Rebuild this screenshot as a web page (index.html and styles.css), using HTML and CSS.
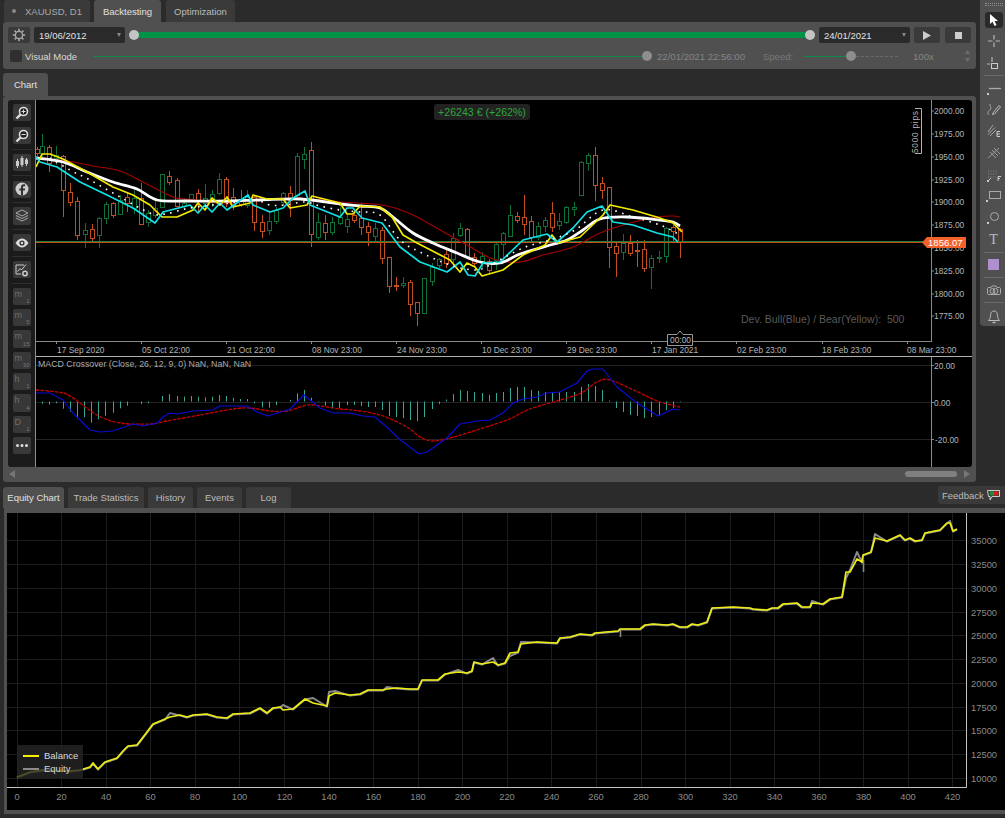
FILE: index.html
```html
<!DOCTYPE html>
<html lang="en">
<head>
<meta charset="utf-8">
<title>cTrader Backtesting</title>
<link rel="stylesheet" href="styles.css">
</head>
<body>
<div class="top">
  <div class="main">
    <div class="tabs">
      <div class="tab tab-sym"><span class="dot"></span>XAUUSD, D1</div>
      <div class="tab active tab-bt">Backtesting</div>
      <div class="tab tab-opt">Optimization</div>
    </div>
    <div class="ctrl">
      <div class="ctrl-row">
        <div class="btn gear"><svg width="14" height="14" viewBox="0 0 14 14"><circle cx="7" cy="7" r="3.6" fill="none" stroke="#aaa" stroke-width="1.3"/><path d="M7 .8V3M7 11V13.2M.8 7H3M11 7H13.2M2.6 2.6L4.2 4.2M9.8 9.8L11.4 11.4M2.6 11.4L4.2 9.8M9.8 4.2L11.4 2.6" stroke="#aaa" stroke-width="1.6"/></svg></div>
        <div class="date">19/06/2012<span class="caret"></span></div>
        <div class="range"><span class="knob"></span><span class="bar"></span><span class="knob"></span></div>
        <div class="date">24/01/2021<span class="caret"></span></div>
        <div class="btn act"><svg width="8" height="9" viewBox="0 0 8 9"><path d="M0 0L8 4.5L0 9Z" fill="#ccc"/></svg></div>
        <div class="btn act act2"><svg width="7" height="7" viewBox="0 0 7 7"><rect width="7" height="7" fill="#ccc"/></svg></div>
      </div>
      <div class="ctrl-row second">
        <span class="check"></span>
        <span class="vm">Visual Mode</span>
        <div class="track"><span class="thin"></span><span class="knob dim"></span></div>
        <span class="stamp">22/01/2021 22:56:00</span>
        <span class="speed">Speed:</span>
        <div class="speedbar"><span class="thin"></span><span class="knob dim"></span><span class="dash"></span></div>
        <span class="mult">100x</span>
        <svg class="spin" width="5" height="12" viewBox="0 0 5 12"><path d="M0 4L2.5 0L5 4ZM0 8L2.5 12L5 8Z" fill="#6e6e6e"/></svg>
      </div>
    </div>
    <div class="tab active tab-chart">Chart</div>
    <div class="chartpanel">
      <div class="chartbody">
        <div class="side">
          <div class="sb first"><svg width="14" height="14" viewBox="0 0 14 14"><circle cx="8.5" cy="5.5" r="4" fill="#222" stroke="#ddd" stroke-width="1.6"/><path d="M5.5 8.5L1.5 12.5" stroke="#ddd" stroke-width="2.4"/><path d="M6.5 5.5H10.5M8.5 3.5V7.5" stroke="#ddd"/></svg></div>
          <div class="sb"><svg width="14" height="14" viewBox="0 0 14 14"><circle cx="8.5" cy="5.5" r="4" fill="#222" stroke="#ddd" stroke-width="1.6"/><path d="M5.5 8.5L1.5 12.5" stroke="#ddd" stroke-width="2.4"/><path d="M6.5 5.5H10.5" stroke="#ddd"/></svg></div>
          <span class="sep"></span>
          <div class="sb"><svg width="14" height="14" viewBox="0 0 14 14"><path d="M2.5 4V13M7 1V12M11.5 3V11" stroke="#ccc"/><rect x="1" y="6" width="3" height="5" fill="#ccc"/><rect x="5.5" y="3" width="3" height="7" fill="#ccc"/><rect x="10" y="4.500" width="3" height="4.500" fill="#ccc"/></svg></div>
          <span class="sep"></span>
          <div class="sb"><svg width="14" height="14" viewBox="0 0 14 14"><circle cx="7" cy="7" r="6.500" fill="#ccc"/><path d="M8 13.500V8.500H9.800L10.100 6.500H8V5.300C8 4.600 8.300 4.200 9 4.200H10.200V2.500C9.800 2.400 9.300 2.300 8.700 2.300C7 2.300 6 3.300 6 5V6.500H4.300V8.500H6V13.500Z" fill="#333"/></svg></div>
          <span class="sep"></span>
          <div class="sb"><svg width="14" height="14" viewBox="0 0 14 14"><path d="M7 1L13 4L7 7L1 4Z" fill="none" stroke="#aaa"/><path d="M1 6.500L7 9.500L13 6.500M1 9L7 12L13 9" fill="none" stroke="#aaa"/></svg></div>
          <span class="sep"></span>
          <div class="sb"><svg width="14" height="10" viewBox="0 0 14 10"><path d="M.5 5C3 1.500 5 .5 7 .5S11 1.500 13.500 5C11 8.500 9 9.500 7 9.500S3 8.500 .5 5Z" fill="#ddd"/><circle cx="7" cy="5" r="2.600" fill="#333"/><circle cx="7" cy="5" r="1.200" fill="#ddd"/></svg></div>
          <span class="sep"></span>
          <div class="sb"><svg width="14" height="14" viewBox="0 0 14 14"><path d="M9 2H1V11H6" fill="none" stroke="#ccc"/><path d="M2.500 8.500L5 5.500L6.500 7L11 1.500" fill="none" stroke="#ccc"/><circle cx="10" cy="10.500" r="2.200" fill="none" stroke="#ccc" stroke-width="1.500"/></svg></div>
          <span class="sep"></span>
          <div class="sb tf">m<sub>1</sub></div>
          <div class="sb tf">m<sub>5</sub></div>
          <div class="sb tf">m<sub>15</sub></div>
          <div class="sb tf">m<sub>30</sub></div>
          <div class="sb tf">h<sub>1</sub></div>
          <div class="sb tf">h<sub>4</sub></div>
          <div class="sb tf">D<sub>1</sub></div>
          <div class="sb"><svg width="12" height="3" viewBox="0 0 12 3"><circle cx="1.500" cy="1.500" r="1.500" fill="#ddd"/><circle cx="6" cy="1.500" r="1.500" fill="#ddd"/><circle cx="10.500" cy="1.500" r="1.500" fill="#ddd"/></svg></div>
        </div>
        <svg class="chart" id="chart" width="936" height="367" viewBox="36 100 936 367">
          <path class="grid" d="M36 365.500H931M36 402.500H931M36 439.500H931"/>
          <g id="candles"></g>
          <path class="pl-g" d="M36 241.500H925"/>
          <path class="pl-o" d="M36 242.500H925"/>
          <g id="lines"></g>
          <g id="macd"></g>
          <path class="axis" d="M931.500 100V342M36 341.500H931.500M931.500 357V467"/>
          <path class="sepline" d="M36 356.500H972"/>
          <path class="axis" d="M56.500 341V344M141.500 341V344M226.500 341V344M311.500 341V344M396.500 341V344M481.500 341V344M566.500 341V344M651.500 341V344M736.500 341V344M822.500 341V344M907.500 341V344"/>
          <path class="axis" d="M931 111H934M931 134H934M931 157H934M931 180H934M931 202H934M931 225H934M931 248H934M931 271H934M931 294H934M931 316H934M931 365.500H934M931 402.500H934M931 439.500H934"/>
          <g class="ax">
            <text x="934" y="114">2000.00</text><text x="934" y="137">1975.00</text><text x="934" y="160">1950.00</text><text x="934" y="183">1925.00</text><text x="934" y="205">1900.00</text><text x="934" y="228">1875.00</text><text x="934" y="251">1850.00</text><text x="934" y="274">1825.00</text><text x="934" y="297">1800.00</text><text x="934" y="319">1775.00</text>
            <text x="57" y="353">17 Sep 2020</text><text x="142" y="353">05 Oct 22:00</text><text x="227" y="353">21 Oct 22:00</text><text x="312" y="353">08 Nov 23:00</text><text x="397" y="353">24 Nov 23:00</text><text x="482" y="353">10 Dec 23:00</text><text x="567" y="353">29 Dec 23:00</text><text x="652" y="353">17 Jan 2021</text><text x="737" y="353">02 Feb 23:00</text><text x="822" y="353">18 Feb 23:00</text><text x="907" y="353">08 Mar 23:00</text>
            <text x="934" y="369">20.00</text><text x="934" y="406">0.00</text><text x="935" y="443">-20.00</text>
            <text x="38" y="367" class="macdlabel">MACD Crossover (Close, 26, 12, 9, 0) NaN, NaN, NaN</text>
          </g>
          <path class="pips" d="M915 108.500H921.500V153.500H915"/>
          <text class="ax pipstxt" transform="translate(918 153) rotate(-90)">5000 pips</text>
          <text class="dev" x="741" y="323">Dev. Bull(Blue) / Bear(Yellow):  500</text>
          <polygon class="pricetag" points="922,242.500 927,237 966,237 966,248 927,248"/>
          <text class="pricetxt" x="928" y="246">1856.07</text>
          <path class="timetag" d="M667.500 334.500H677L680 331L683 334.500H692.500V345.500H667.500Z"/>
          <text class="timetxt" x="670" y="343">00:00</text>
        </svg>
        <div class="profit">+26243 € (+262%)</div>
      </div>
      <div class="scroll">
        <svg width="6" height="8" viewBox="0 0 6 8"><path d="M6 0L0 4L6 8Z" fill="#767676"/></svg>
        <span class="thumb"></span>
        <svg width="6" height="8" viewBox="0 0 6 8"><path d="M0 0L6 4L0 8Z" fill="#767676"/></svg>
      </div>
    </div>
  </div>
  <div class="tools">
    <span class="grip"></span>
    <div class="tb on"><svg width="12" height="14" viewBox="0 0 12 14"><path d="M2 1V11L4.500 8.800L6.500 13L8.500 12L6.500 8H10Z" fill="#fff"/></svg></div>
    <div class="tb"><svg width="14" height="14" viewBox="0 0 14 14"><path d="M7 1V5.500M7 8.500V13M1 7H5.500M8.500 7H13" stroke="#b5b5b5" stroke-width="1.200"/></svg></div>
    <div class="tb"><svg width="14" height="14" viewBox="0 0 14 14"><path d="M5 1V6M0 8H3" stroke="#b5b5b5" stroke-width="1.200"/><rect x="4.500" y="7.500" width="6" height="5" fill="none" stroke="#ccc"/></svg></div>
    <span class="tsep"></span>
    <div class="tb"><svg width="16" height="16" viewBox="0 0 16 16"><path d="M3 9.500H15" stroke="#aaa" stroke-width="1.300"/><rect x="1" y="14" width="2" height="2" fill="#ccc"/></svg></div>
    <div class="tb"><svg width="14" height="14" viewBox="0 0 14 14"><path d="M2 13C0 11 1 9 3 8S3 4 3 2" fill="none" stroke="#aaa"/><path d="M6 11L12 3.500L13.500 5L7.500 12L5.500 12.500Z" fill="none" stroke="#bbb"/></svg></div>
    <div class="tb"><svg width="14" height="14" viewBox="0 0 14 14"><path d="M1 8L6 1M1 10.500L8 3.500M3 12L9 6" stroke="#aaa"/><path d="M10 7.500H13M10 10H13M10 12.500H13M10 7.500V12.500" stroke="#ccc"/></svg></div>
    <div class="tb"><svg width="14" height="14" viewBox="0 0 14 14"><path d="M1 13L12 3M5 5L11 11M3 7L9 13M7 3L13 9" stroke="#999" transform="translate(0 -1)"/></svg></div>
    <div class="tb"><svg width="14" height="14" viewBox="0 0 14 14"><path d="M1 3H11M1 6H11M1 9H9" stroke="#888" stroke-dasharray="1 1.500"/><path d="M11 8.500H14M11 8.500V13M11 10.500H13" stroke="#ccc"/><path d="M4 10L1 13" stroke="#ccc"/><rect x="0" y="12" width="2" height="2" fill="#ccc"/></svg></div>
    <div class="tb"><svg width="15" height="14" viewBox="0 0 15 14"><rect x="3.500" y="2.500" width="11" height="7" fill="none" stroke="#aaa"/><rect x="0" y="11" width="2" height="2" fill="#ccc"/></svg></div>
    <div class="tb"><svg width="15" height="14" viewBox="0 0 15 14"><circle cx="8.500" cy="5.500" r="4" fill="none" stroke="#aaa"/><rect x="1" y="11" width="2" height="2" fill="#ccc"/></svg></div>
    <div class="tb ttxt">T</div>
    <span class="tsep"></span>
    <div class="tb"><span class="swatch"></span></div>
    <span class="tsep"></span>
    <div class="tb"><svg width="14" height="12" viewBox="0 0 14 12"><path d="M1.500 3.500H4L5 2H9L10 3.500H12.500C13 3.500 13.500 4 13.500 4.500V9C13.500 10 13 10.500 12 10.500H2C1 10.500 .5 10 .5 9V4.500C.5 4 1 3.500 1.500 3.500Z" fill="none" stroke="#aaa"/><circle cx="5.500" cy="7" r="2.500" fill="none" stroke="#aaa"/><circle cx="8.500" cy="7" r="2.500" fill="none" stroke="#aaa"/></svg></div>
    <span class="tsep"></span>
    <div class="tb bell"><svg width="12" height="14" viewBox="0 0 12 14"><path d="M6 1C8.500 1 9.500 3 9.500 5.500C9.500 8 10.500 9.500 11.500 10.500H.5C1.500 9.500 2.500 8 2.500 5.500C2.500 3 3.500 1 6 1Z" fill="none" stroke="#bbb"/><path d="M4.500 12.500H7.500" stroke="#bbb" stroke-width="1.400"/></svg></div>
  </div>
</div>
<div class="bottomhead">
  <div class="tab active b1">Equity Chart</div>
  <div class="tab b2">Trade Statistics</div>
  <div class="tab b3">History</div>
  <div class="tab b3">Events</div>
  <div class="tab b3">Log</div>
  <div class="feedback">Feedback
    <svg width="13" height="11" viewBox="0 0 13 11"><path d="M.5 .5H12.500V6.500H5L3 10V6.500H1.500Z" fill="none" stroke="#ccc"/><path d="M3 1.500H7V5.500H3Z" fill="#1f8f3a"/><path d="M7 1.500H11.500V5.500H7Z" fill="#d11f1f"/></svg>
  </div>
</div>
<div class="equity">
  <svg class="eqchart" id="eq" width="998" height="297" viewBox="7 513 998 297">
    <path class="eqgrid" d="M7 540.500H966M7 564.500H966M7 588.500H966M7 612.500H966M7 635.500H966M7 659.500H966M7 683.500H966M7 707.500H966M7 730.500H966M7 754.500H966M7 778.500H966"/>
    <path class="eqgrid" d="M17.500 513V787M61.500 513V787M106.500 513V787M150.500 513V787M195.500 513V787M239.500 513V787M284.500 513V787M329.500 513V787M373.500 513V787M418.500 513V787M462.500 513V787M507.500 513V787M551.500 513V787M596.500 513V787M641.500 513V787M685.500 513V787M730.500 513V787M774.500 513V787M819.500 513V787M863.500 513V787M908.500 513V787M952.500 513V787"/>
    <g id="eqlines"></g>
    <path class="eqaxis" d="M966.500 513V787.500M7 787.500H966.500"/>
    <g class="eqax">
      <text x="971" y="544">35000</text><text x="971" y="568">32500</text><text x="971" y="592">30000</text><text x="971" y="616">27500</text><text x="971" y="639">25000</text><text x="971" y="663">22500</text><text x="971" y="687">20000</text><text x="971" y="711">17500</text><text x="971" y="734">15000</text><text x="971" y="758">12500</text><text x="971" y="782">10000</text>
    </g>
    <g class="eqax mid">
      <text x="17" y="800">0</text><text x="61.500" y="800">20</text><text x="106" y="800">40</text><text x="150.500" y="800">60</text><text x="195" y="800">80</text><text x="239.500" y="800">100</text><text x="284.500" y="800">120</text><text x="329" y="800">140</text><text x="373.500" y="800">160</text><text x="418" y="800">180</text><text x="462.500" y="800">200</text><text x="507" y="800">220</text><text x="551.500" y="800">240</text><text x="596" y="800">260</text><text x="641" y="800">280</text><text x="685.500" y="800">300</text><text x="730" y="800">320</text><text x="774.500" y="800">340</text><text x="819" y="800">360</text><text x="863.500" y="800">380</text><text x="908" y="800">400</text><text x="952.500" y="800">420</text>
    </g>
  </svg>
  <div class="legend">
    <div class="lg"><span class="sw yellow"></span>Balance</div>
    <div class="lg"><span class="sw gray"></span>Equity</div>
  </div>
</div>
<script src="chart.js"></script>
</body>
</html>
```
FILE: styles.css
```css
* { box-sizing: border-box; }
html, body { margin: 0; padding: 0; }
body {
  width: 1005px;
  height: 818px;
  overflow: hidden;
  background: #2b2b2b;
  font-family: "Liberation Sans", Arial, sans-serif;
  font-size: 9.5px;
  color: #c8c8c8;
}
.top { display: flex; height: 483px; }
.main { width: 976px; padding-left: 3px; flex: none; }

.tabs { display: flex; height: 22px; padding-left: 1px; gap: 4px; }
.tab {
  display: flex;
  align-items: center;
  justify-content: center;
  height: 100%;
  background: #3a3a3a;
  border-radius: 3px 3px 0 0;
  color: #bcbcbc;
}
.tab.active { background: #505050; color: #e0e0e0; }
.tab-sym { width: 86px; color: #a8a8a8; }
.tab-bt { width: 67px; }
.tab-opt { width: 69px; margin-left: 1px; }
.dot { width: 4px; height: 4px; border-radius: 50%; background: #888; margin-right: 9px; }

.ctrl {
  height: 47px;
  background: #505050;
  border-radius: 3px;
  padding: 5px 5px 0 5px;
  display: flex;
  flex-direction: column;
  gap: 7px;
}
.ctrl-row { display: flex; align-items: center; height: 16px; gap: 4px; }
.ctrl-row > * { flex: none; }
.ctrl-row.second { padding-left: 2px; gap: 0; height: 12px; }
.btn {
  height: 16px;
  background: #3a3a3a;
  border-radius: 2px;
  display: flex;
  align-items: center;
  justify-content: center;
}
.gear { width: 22px; }
.act { width: 26px; }
.act2 { margin-left: 1px; }
.date {
  width: 91px;
  height: 16px;
  background: #2a2a2a;
  border-radius: 2px;
  padding-left: 5px;
  display: flex;
  align-items: center;
  justify-content: space-between;
  color: #e0e0e0;
  font-size: 9.5px;
}
.caret {
  width: 0;
  height: 0;
  margin-right: 4px;
  border-left: 2.5px solid transparent;
  border-right: 2.5px solid transparent;
  border-top: 4px solid #888;
}
.range { display: flex; align-items: center; width: 686px; }
.range .bar { flex: 1; height: 6px; background: #009348; margin: 0 -1px; }
.knob { flex: none; width: 10px; height: 10px; border-radius: 50%; background: #c4c4c4; position: relative; z-index: 1; }
.knob.dim { background: #8e8e8e; }
.check { width: 12px; height: 12px; background: #2f2f2f; border-radius: 2px; }
.vm { margin-left: 3px; width: 69px; color: #d8d8d8; }
.track { display: flex; align-items: center; width: 558px; }
.thin { flex: 1; height: 1px; background: #0f8a49; }
.stamp { margin-left: 5px; width: 106px; color: #858585; font-size: 9.6px; }
.speed { width: 40px; color: #787878; }
.speedbar { display: flex; align-items: center; width: 95px; }
.speedbar .thin { flex: 1; }
.dash { flex: 1; border-top: 1px dashed #6b6b6b; }
.mult { margin-left: 15px; width: 52px; color: #858585; font-size: 9.6px; }

.tab-chart { width: 45px; height: 23px; margin-top: 4px; }
.chartpanel { height: 386px; background: #505050; border-radius: 3px; padding: 4px 4px 0 5px; }
.chartbody { position: relative; display: flex; height: 367px; }
.side {
  width: 28px;
  flex: none;
  background: #1b1b1b;
  border-right: 1px solid #8c8c8c;
  border-radius: 3px 0 0 3px;
  display: flex;
  flex-direction: column;
  align-items: center;
  padding-top: 4px;
  gap: 4px;
}
.sb {
  width: 18px;
  height: 17.3px;
  flex: none;
  background: #383838;
  border-radius: 2px;
  display: flex;
  align-items: center;
  justify-content: center;
}
.sb.first { margin-bottom: 1.7px; }
.tf {
  align-items: flex-start;
  justify-content: flex-start;
  padding: 2px 0 0 2px;
  color: #6f6f6f;
  font-size: 9px;
  line-height: 9px;
  position: relative;
}
.tf sub { position: absolute; right: 1px; bottom: 0; font-size: 6px; line-height: 7px; color: #777; }
.sep { width: 20px; height: 1px; background: #2e2e2e; flex: none; margin: 0.25px 0; }
.chart { display: block; background: #000; flex: none; border-radius: 0 3px 3px 0; }
.profit {
  position: absolute;
  left: 426px;
  top: 4px;
  width: 96px;
  height: 16px;
  background: #222;
  border-radius: 3px;
  color: #2da73c;
  font-size: 10.6px;
  line-height: 16px;
  text-align: center;
}
.scroll { height: 14px; display: flex; align-items: center; padding-left: 1px; }
.thumb { width: 52px; height: 6px; border-radius: 3px; background: #808080; margin: 0 7px 0 auto; }
.scroll svg:last-child { margin-right: 2px; }

.grid { stroke: #222; stroke-width: 1; fill: none; }
.eqgrid { stroke: #1d1d1d; stroke-width: 1; fill: none; }
.pl-g { stroke: #1f7f3a; stroke-width: 1; }
.pl-o { stroke: #c9501e; stroke-width: 1; }
.axis { stroke: #8a8a8a; stroke-width: 1; fill: none; }
.sepline { stroke: #b0b0b0; stroke-width: 1; }
.ax text, text.ax { font-family: "Liberation Sans", Arial, sans-serif; font-size: 8.4px; fill: #b4b4b4; }
.ax .macdlabel { font-size: 8.8px; fill: #a8a8a8; }
text.pipstxt { letter-spacing: 0.7px; }
.pips { stroke: #b0b0b0; fill: none; }
.dev { font-family: "Liberation Sans", Arial, sans-serif; font-size: 10.5px; fill: #5a5a5a; white-space: pre; }
.pricetag { fill: #f2622a; }
.pricetxt { font-family: "Liberation Sans", Arial, sans-serif; font-size: 9.6px; fill: #fff; }
.timetag { fill: #000; stroke: #9a9a9a; }
.timetxt { font-family: "Liberation Sans", Arial, sans-serif; font-size: 8.4px; fill: #bbb; }

.tools {
  width: 25px;
  height: 326px;
  margin-left: 4px;
  flex: none;
  background: #505050;
  border-radius: 0 0 0 4px;
  display: flex;
  flex-direction: column;
  align-items: center;
  padding: 3px 0 0 2px;
}
.grip { width: 18px; height: 3px; flex: none; margin-bottom: 6px; border-top: 1px dotted #8a8a8a; border-bottom: 1px dotted #8a8a8a; }
.tb { width: 18px; height: 21.8px; flex: none; display: flex; align-items: center; justify-content: center; }
.tb.on { height: 16px; background: #2a2a2a; border-radius: 3px; margin-bottom: 2px; }
.tb.bell { margin-top: 3px; }
.tsep { width: 20px; height: 1px; background: #6a6a6a; flex: none; margin: 1px 0; }
.ttxt { font-family: "Liberation Serif", serif; font-size: 14px; color: #bbb; }
.swatch { width: 11px; height: 11px; background: #ae90cf; }

.bottomhead { display: flex; height: 21px; margin-top: 4px; padding-left: 3px; gap: 4px; }
.b1 { width: 61px; }
.b2 { width: 76px; }
.b3 { width: 45px; }
.feedback {
  margin-left: auto;
  width: 67px;
  height: 18px;
  margin-top: -1px;
  background: #3a3a3a;
  border-radius: 3px 0 0 3px;
  display: flex;
  align-items: center;
  gap: 3px;
  padding-left: 4px;
  color: #bcbcbc;
}
.equity {
  position: relative;
  margin-left: 4px;
  width: 1001px;
  height: 306px;
  border-top: 5px solid #505050;
  border-bottom: 4px solid #505050;
  border-left: 3px solid #505050;
  background: #000;
}
.eqchart { display: block; }
.eqaxis { stroke: #c4c4c4; fill: none; stroke-width: 1; }
.eqax text { font-family: "Liberation Sans", Arial, sans-serif; font-size: 9.4px; fill: #8a8a8a; }
.eqax.mid text { text-anchor: middle; }
.legend {
  position: absolute;
  left: 10px;
  top: 232px;
  width: 66px;
  height: 33px;
  background: rgba(38, 38, 38, 0.8);
  padding: 4px 0 0 6px;
  color: #d8d8d8;
  font-size: 9.5px;
}
.lg { display: flex; align-items: center; gap: 5px; height: 13px; }
.sw { width: 16px; height: 2px; }
.sw.yellow { background: #f4f000; }
.sw.gray { background: #8a8a8a; }
```
FILE: chart.js
```js
(function () {
  var NS = 'http://www.w3.org/2000/svg';
  function el(parent, name, attrs) {
    var e = document.createElementNS(NS, name);
    for (var k in attrs) e.setAttribute(k, attrs[k]);
    parent.appendChild(e);
    return e;
  }
  function poly(parent, pts, color, w, extra) {
    var a = { points: pts.map(function (p) { return p.join(','); }).join(' '), fill: 'none', stroke: color, 'stroke-width': w, 'stroke-linejoin': 'round' };
    for (var k in extra || {}) a[k] = extra[k];
    return el(parent, 'polyline', a);
  }
  // Catmull-Rom through the points, for the moving averages
  function smooth(parent, p, color, w, extra) {
    var d = 'M' + p[0][0] + ' ' + p[0][1];
    for (var i = 0; i < p.length - 1; i++) {
      var a = p[Math.max(i - 1, 0)], b = p[i], c = p[i + 1], e = p[Math.min(i + 2, p.length - 1)];
      d += 'C' + (b[0] + (c[0] - a[0]) / 6).toFixed(1) + ' ' + (b[1] + (c[1] - a[1]) / 6).toFixed(1) + ' ' +
        (c[0] - (e[0] - b[0]) / 6).toFixed(1) + ' ' + (c[1] - (e[1] - b[1]) / 6).toFixed(1) + ' ' + c[0] + ' ' + c[1];
    }
    var at = { d: d, fill: 'none', stroke: color, 'stroke-width': w, 'stroke-linejoin': 'round' };
    for (var k in extra || {}) at[k] = extra[k];
    return el(parent, 'path', at);
  }

  // colour, x, wick top, body top, body bottom, wick bottom
  var O = '#c24e1e', G = '#0c7038';
  var candles = [
    [O,36.5,147,149,153,156],[G,42,134,146,153,158],[O,49,145,147,163,172],[G,56,146,155,158,165],
    [O,63.3,155,156,190,217],[O,70.3,183,192,202,206],[O,77.3,197,201,235,240],[G,84.5,223,230,234,248],
    [O,91.5,224,229,238,241],[G,98.5,217,218,235,248],[G,105.7,202,204,218,224],[O,112.7,202,203,215,218],
    [G,120,195,200,214,215],[O,127,193,197,203,212],[G,134,190,198,208,214],[O,141.3,183,198,224,225],
    [G,148.3,210,213,222,227],[G,155.3,200,208,215,218],[G,162.3,174,174,207,208],[O,169.3,171,176,182,185],
    [O,176.5,178,180,206,207],[G,183.6,199,203,206,208],[G,190.7,194,194,200,202],[O,198,189,193,200,213],
    [G,205,184,198,203,207],[G,212,190,194,200,207],[G,219.3,173,179,193,195],[O,226.3,177,179,202,207],
    [O,233.3,188,197,205,210],[O,240.5,190,199,204,207],[G,247.3,190,197,205,208],[O,254.3,195,197,222,231],
    [O,261.7,215,222,231,238],[G,268.7,212,221,230,235],[G,275.7,207,210,221,224],[G,283.3,192,193,202,205],
    [O,290.3,186,193,200,217],[G,297.3,153,156,195,197],[G,304.3,147,154,159,169],[O,311.3,142,150,234,247],
    [G,318.3,213,222,237,240],[O,325.3,215,223,232,240],[G,332.3,217,222,232,235],[G,339.5,207,217,223,225],
    [G,346.7,215,219,226,233],[O,354,212,215,220,223],[O,361,203,218,227,235],[O,368,222,226,232,246],
    [G,375,223,228,236,243],[O,382.3,227,230,258,264],[O,389.3,257,257,286,293],[O,396.3,277,285,286,291],
    [G,403.3,277,283,285,288],[O,410.3,280,282,304,316],[O,417.3,302,302,313,326],[G,424.3,278,278,313,314],
    [G,431.7,263,267,281,286],[G,438.7,258,259,265,268],[O,446,250,254,263,268],[G,453.3,233,238,259,263],
    [G,460.3,223,228,235,237],[O,467.3,228,229,257,258],[O,474.3,253,257,263,267],[G,481.7,252,256,262,268],
    [O,488.7,259,261,270,273],[G,495.7,243,244,260,270],[G,502.7,232,233,244,263],[G,510,205,215,236,237],
    [O,517,212,216,220,223],[O,524,195,217,224,235],[O,531.3,216,221,237,242],[G,538.3,222,226,237,240],
    [G,545.3,217,220,226,232],[O,552.3,202,213,227,232],[G,559.3,213,221,225,230],[G,566.3,206,207,222,224],
    [G,573.7,202,207,209,216],[G,580.7,161,162,195,196],[G,587.7,153,155,163,171],[O,594.7,147,155,185,201],
    [O,602,177,183,190,199],[O,609,187,187,247,268],[O,616,243,246,253,277],[G,623.3,234,243,252,260],
    [O,630.3,235,243,253,256],[O,637.3,240,250,251,267],[O,644.3,240,249,268,272],[G,651.3,255,258,267,289],
    [G,658.7,251,257,258,263],[G,665.7,227,228,256,263],[O,672.7,225,227,231,243],[O,680,228,229,242,258]
  ];
  var cg = document.getElementById('candles');
  candles.forEach(function (c) {
    var x = Math.round(c[1]) + 0.5;
    el(cg, 'path', { d: 'M' + x + ' ' + c[2] + 'V' + c[5], stroke: c[0], 'stroke-width': 1 });
    el(cg, 'rect', { x: x - 2, y: c[3] + 0.5, width: 4, height: Math.max(c[4] - c[3], 1), fill: '#000', stroke: c[0], 'stroke-width': 1 });
  });

  var lg = document.getElementById('lines');
  smooth(lg, [[36,157],[67,161],[93,166],[120,171],[143,182],[173,197],[187,199],[227,204],[250,200],[300,198],[340,202],[373,204],[395,208],[417,217],[440,230],[467,245],[493,259],[520,262],[543,255],[573,247],[600,233],[630,223],[657,217],[673,216],[680,217]], '#a80000', 1.1);
  smooth(lg, [[36,158],[63,162],[87,172],[113,182],[137,189],[157,200],[187,201],[227,201],[260,200],[300,199],[340,204],[360,206],[380,208],[393,217],[413,233],[433,243],[457,253],[480,262],[500,263],[520,254],[547,246],[567,240],[583,230],[600,219],[627,217],[660,220],[673,222],[680,226]], '#ffffff', 2.8);
  poly(lg, [[36,167],[42,154],[50,154],[63,159],[87,172],[113,187],[133,195],[150,205],[162,217],[177,217],[193,210],[198,203],[205,210],[212,198],[220,205],[227,197],[233,207],[250,203],[253,195],[267,199],[283,199],[290,208],[307,205],[312,196],[340,203],[347,214],[353,214],[360,206],[380,207],[392,217],[403,235],[417,243],[450,260],[460,272],[467,263],[475,267],[482,276],[503,270],[523,255],[545,245],[552,235],[558,243],[580,237],[603,215],[610,205],[633,210],[660,218],[673,223],[682,232]], '#f2ea00', 1.7);
  poly(lg, [[36,157],[40,162],[57,167],[80,182],[107,195],[133,208],[155,223],[163,212],[190,205],[198,213],[205,205],[212,212],[220,203],[227,210],[248,195],[253,205],[270,212],[283,208],[293,198],[305,191],[310,205],[340,217],[347,208],[353,208],[362,218],[382,223],[400,247],[420,262],[447,272],[460,262],[468,275],[475,276],[483,263],[500,262],[523,240],[547,234],[557,242],[573,228],[587,212],[602,206],[613,222],[633,225],[657,233],[673,237],[678,242]], '#12e2e6', 1.7);
  smooth(lg, [[50,158],[70,170],[90,180],[120,197],[150,213],[165,214],[190,208],[230,203],[255,200],[270,205],[285,205],[305,202],[320,206],[340,210],[360,212],[380,215],[400,240],[420,252],[450,265],[475,270],[490,265],[523,248],[550,240],[575,230],[603,210],[633,217],[660,225],[680,235]], '#ffffff', 1.6, { 'stroke-dasharray': '1.6 5.5' });

  // MACD histogram: x, end of the bar (y); the zero line is at 401.5
  var zero = 401.5;
  var bars = [[42,403.7],[49,404.7],[56,403.3],[63,408.7],[70,411.7],[77,418.3],[84,417.3],[91,422.7],[98,419.3],[105,415.7],[113,412.7],[120,408.3],[127,405.7],[141,404],[148,403.3],[162,396],[169,394],[177,396],[184,396.7],[191,396],[198,396.7],[205,397.3],[212,396.7],[219,395],[226,396],[233,398],[240,399],[247,399],[254,403.3],[262,407.3],[269,407.7],[276,405],[290,400],[297,393.3],[304,390],[311,397.7],[318,401],[325,405.7],[332,408.3],[339,408.3],
    [347,405],[354,405],[361,406],[368,407],[375,407],[382,410],[389,416],[396,417],[403,418],[410,420],[417,421],[424,417],[432,409],[439,404],[446,399.5],[453,394],[460,390],[467,391],[474,392],[482,393],[489,395],[496,393],[503,392],[510,388],[517,387],[524,387],[531,390],[538,391],[545,392],[552,392],[559,392],[566,392],[574,392],[581,387],[588,384],[595,386],[602,390],[609,400.5],[616,408],[623,412],[630,415],[637,416],[644,418],[651,417],[659,416],[666,410],[673,408],[680,401]];
  var mg = document.getElementById('macd');
  el(mg, 'path', {
    d: bars.map(function (b) { return 'M' + (b[0] + 0.5) + ' ' + zero + 'V' + b[1]; }).join(''),
    stroke: '#35a898', 'stroke-width': 1, fill: 'none'
  });
  smooth(mg, [[36,390],[57,392],[70,396],[97,415],[120,423],[150,424],[167,421],[200,415],[233,409],[250,408],[270,411],[287,411],[303,406],[313,405],[340,409],[353,410],[380,415],[407,427],[420,437],[433,441],[450,438],[467,433],[507,420],[530,409],[567,398],[583,392],[597,382],[610,380],[640,393],[660,402],[680,407]], '#c80000', 1.3, { 'stroke-dasharray': '3.5 1.2' });
  poly(mg, [[36,393],[50,393],[63,400],[73,413],[90,430],[100,432],[113,431],[133,424],[143,426],[157,423],[163,417],[170,413],[177,414],[193,411],[213,410],[220,406],[247,406],[257,412],[268,416],[290,409],[304,395],[320,408],[333,413],[350,413],[363,416],[375,417],[390,430],[398,438],[419,454],[427,452],[447,438],[460,424],[477,421],[490,420],[503,413],[513,403],[523,399],[537,397],[547,393],[560,392],[577,383],[587,371],[593,369],[603,369],[617,387],[637,403],[658,416],[673,409],[680,410]], '#0b0bd8', 1.2);

  // Equity chart
  var eq = [[17,777],[30,772],[43,770],[70,771],[80,770],[90,767],[93,763],[98,769],[105,762],[117,758],[123,751],[128,746],[137,745],[147,732],[153,724],[165,719],[170,717],[180,715],[187,717],[193,715],[207,714],[217,717],[227,718],[233,714],[250,713],[260,708],[267,713],[273,708],[280,707],[283,710],[293,709],[305,699],[313,703],[327,706],[329,696],[335,693],[350,695],[360,694],[368,690],[377,690],[383,690],[387,689],[397,688],[410,689],[418,689],[422,680],[430,680],[438,680],[445,674],[458,672],[467,673],[472,671],[474,662],[482,664],[493,662],[498,665],[505,663],[510,653],[518,652],[521,644],[537,642],[557,643],[560,638],[570,637],[580,634],[592,635],[595,633],[618,631],[620,629],[640,629],[645,625],[653,624],[667,625],[673,624],[680,627],[687,627],[692,624],[698,625],[707,622],[712,608],[733,607],[750,608],[753,609],[767,610],[772,608],[778,608],[783,604],[797,603],[802,607],[810,607],[812,603],[823,604],[830,599],[842,597],[846,572],[850,572],[857,559],[862,562],[863,555],[871,552],[875,538],[887,541],[900,535],[905,540],[910,538],[915,541],[922,540],[925,533],[940,530],[947,523],[950,523],[953,531],[957,529]];
  var eg = document.getElementById('eqlines');
  var spikes = { 170: 713, 283: 705, 313: 698, 329: 692, 335: 691, 387: 687, 458: 670, 493: 658, 510: 656, 521: 642, 812: 601, 846: 578, 850: 570, 857: 552, 875: 534, 950: 521 };
  poly(eg, eq.map(function (p) {
    return [p[0], spikes[p[0]] !== undefined ? spikes[p[0]] : p[1] + 0.6];
  }), '#8a8a8a', 2);
  el(eg, 'path', { d: 'M620.5 630V637M863.5 560V572', stroke: '#8a8a8a', 'stroke-width': 1.6 });
  poly(eg, eq, '#ecec12', 1.7);
})();
```
